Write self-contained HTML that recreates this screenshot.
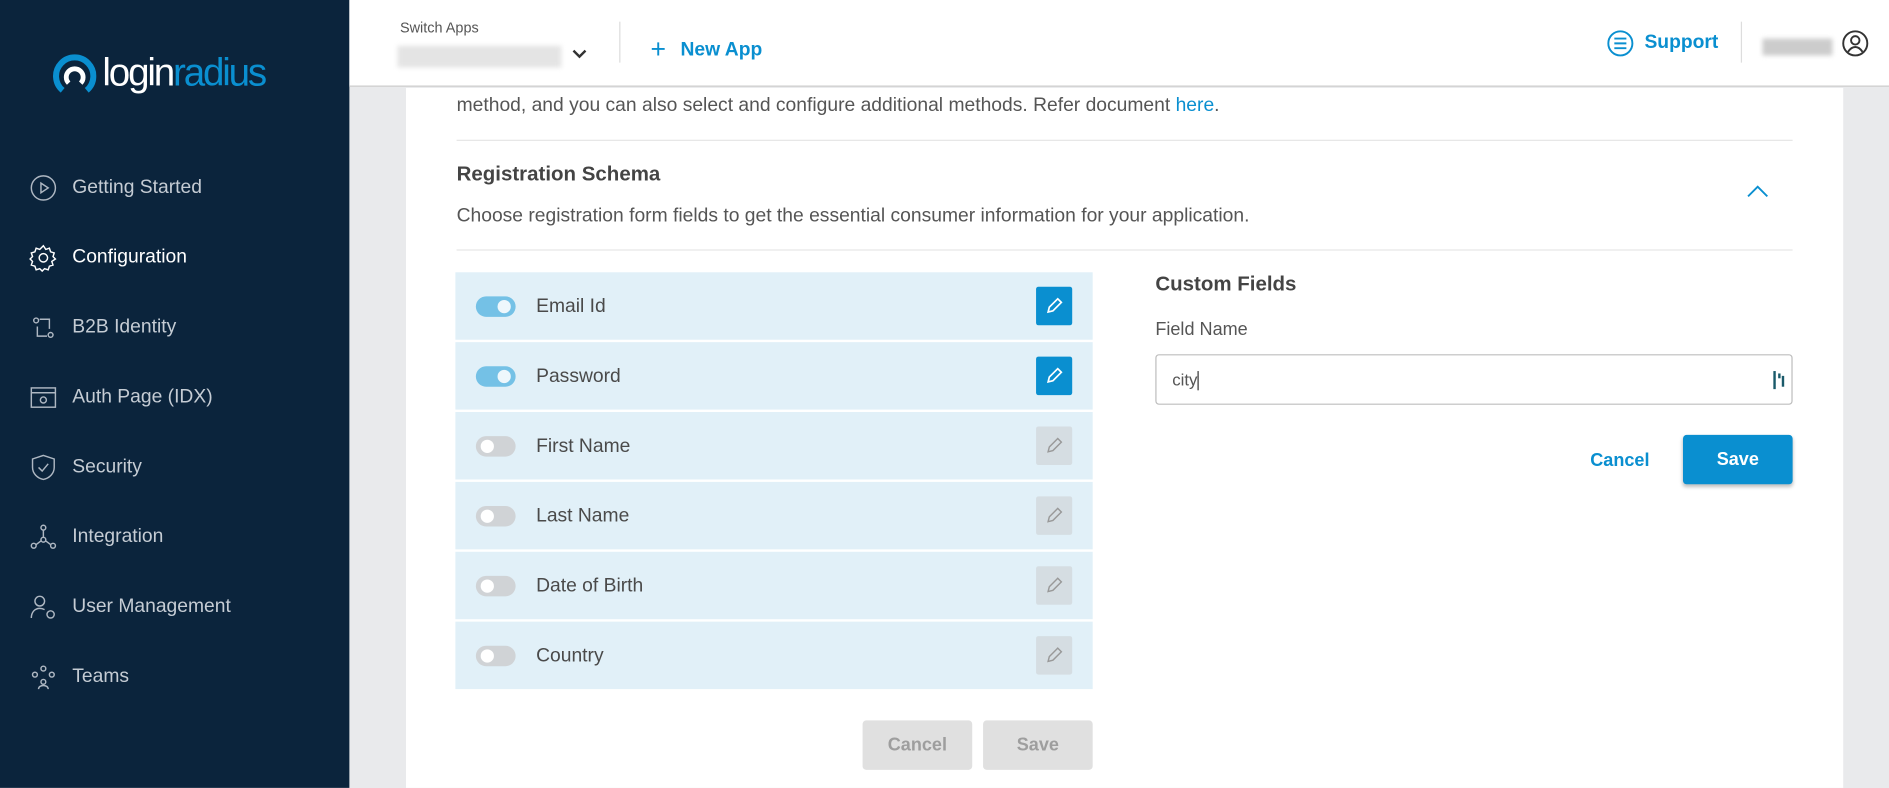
<!DOCTYPE html>
<html><head><meta charset="utf-8"><style>
*{box-sizing:border-box;margin:0;padding:0}
html,body{width:1889px;height:788px;overflow:hidden;background:#e9eaec}
#w{position:absolute;left:0;top:0;width:1568px;height:654px;transform:scale(1.20472);transform-origin:0 0;font-family:"Liberation Sans Narrow","Liberation Sans",sans-serif;color:#444}
.a{position:absolute}
#side{left:0;top:0;width:290px;height:654px;background:#0b243c}
.nav{position:absolute;left:24px;height:24px;display:flex;align-items:center;color:#c5ccd4;font-size:16px}
.nav svg{width:24px;height:24px;margin-right:12px}
#top{left:290px;top:0;width:1278px;height:72px;background:#fff;border-bottom:1px solid #c9c9c9}
#panel{left:337px;top:73px;width:1193px;height:581px;background:#fff}
.t{position:absolute;white-space:nowrap}
.row{position:absolute;left:378px;width:529px;height:56px;background:#e1f0f8}
.tg{position:absolute;left:17px;top:20px;width:33px;height:17px;border-radius:9px;background:#d0d3d6}
.tg i{position:absolute;top:3px;left:4px;width:11px;height:11px;border-radius:50%;background:#fff}
.on{background:#74c1e6}.on i{left:18px;background:#eef7fc}
.lb{position:absolute;left:67px;top:20px;font-size:16px;color:#4a4a4a}
.ed{position:absolute;left:482px;top:12px;width:30px;height:32px;border-radius:2px;background:#d5dde2}
.ed.b{background:#0a8fd0}
.ed svg{position:absolute;left:7px;top:8px}
.btn{position:absolute;height:41px;border-radius:3px;font-size:15px;font-weight:bold;display:flex;align-items:center;justify-content:center}
hr{position:absolute;border:0;border-top:1px solid #e6e6e6;height:0}
</style></head><body><div id="w">
<div id="side" class="a">
 <svg class="a" style="left:44px;top:42px" width="36" height="38" viewBox="0 0 36 38"><path d="M8 33 A15.5 15.5 0 1 1 28 33" fill="none" stroke="#0a8fd0" stroke-width="5"/><path d="M13 27 A7 7 0 1 1 23 27" fill="none" stroke="#fff" stroke-width="4"/></svg>
 <div class="t" style="left:85px;top:42px;font-size:32px;letter-spacing:-1.8px"><span style="color:#fff">login</span><span style="color:#0a8fd0">radius</span></div>
 <div class="nav" style="top:144px"><svg viewBox="0 0 24 24" fill="none" stroke="#aeb7c2" stroke-width="1.2"><circle cx="12" cy="12" r="10"/><path d="M10 8v8l6-4z"/></svg>Getting Started</div>
 <div class="nav" style="top:202px;color:#fff"><svg viewBox="0 0 24 24" fill="none" stroke="#fff" stroke-width="1.2"><circle cx="12" cy="12" r="3.5"/><path d="M12 2l2 3 3-1 1 3 3 1-1 3 2 2-3 2 1 3-3 1-1 3-3-1-2 2-2-2-3 1-1-3-3-1 1-3-2-2 2-2-1-3 3-1 1-3 3 1z"/></svg>Configuration</div>
 <div class="nav" style="top:260px"><svg viewBox="0 0 24 24" fill="none" stroke="#aeb7c2" stroke-width="1.2"><circle cx="6" cy="6" r="2"/><circle cx="18" cy="18" r="2"/><path d="M9 5h8v8M15 19H7v-8"/></svg>B2B Identity</div>
 <div class="nav" style="top:318px"><svg viewBox="0 0 24 24" fill="none" stroke="#aeb7c2" stroke-width="1.2"><rect x="2" y="4" width="20" height="16"/><path d="M2 8h20"/><circle cx="12" cy="14" r="2.5"/></svg>Auth Page (IDX)</div>
 <div class="nav" style="top:376px"><svg viewBox="0 0 24 24" fill="none" stroke="#aeb7c2" stroke-width="1.2"><path d="M12 2l9 3v7c0 5-4 9-9 10-5-1-9-5-9-10V5z"/><path d="M8 12l3 3 5-6"/></svg>Security</div>
 <div class="nav" style="top:434px"><svg viewBox="0 0 24 24" fill="none" stroke="#aeb7c2" stroke-width="1.2"><circle cx="12" cy="4" r="2"/><circle cx="4" cy="19" r="2"/><circle cx="20" cy="19" r="2"/><circle cx="12" cy="14" r="2"/><path d="M12 6v6M6 18l4-3M18 18l-4-3"/></svg>Integration</div>
 <div class="nav" style="top:492px"><svg viewBox="0 0 24 24" fill="none" stroke="#aeb7c2" stroke-width="1.2"><circle cx="9" cy="7" r="4"/><path d="M2 21c0-5 3-8 7-8 2 0 3 .5 4 1"/><circle cx="18" cy="18" r="3"/></svg>User Management</div>
 <div class="nav" style="top:550px"><svg viewBox="0 0 24 24" fill="none" stroke="#aeb7c2" stroke-width="1.2"><circle cx="12" cy="5" r="2"/><circle cx="5" cy="10" r="2"/><circle cx="19" cy="10" r="2"/><circle cx="12" cy="16" r="2"/><path d="M8 22c0-2 2-3 4-3s4 1 4 3"/></svg>Teams</div>
</div>
<div id="top" class="a">
 <div class="t" style="left:42px;top:16px;font-size:12px;color:#555">Switch Apps</div>
 <div class="a" style="left:40px;top:38px;width:136px;height:18px;background:#e4e4e4;filter:blur(2px)"></div>
 <svg class="a" style="left:184px;top:40px" width="14" height="10" viewBox="0 0 14 10"><path d="M2 2l5 5 5-5" fill="none" stroke="#333" stroke-width="2"/></svg>
 <div class="a" style="left:224px;top:18px;width:1px;height:34px;background:#ddd"></div>
 <div class="t" style="left:250px;top:26px;font-size:16px;color:#0a8fd0;font-weight:bold"><span style="font-weight:normal;font-size:22px;position:relative;top:2px;margin-right:12px">+</span>New App</div>
 <svg class="a" style="left:1044px;top:25px" width="22" height="22" viewBox="0 0 22 22" fill="none" stroke="#0a8fd0" stroke-width="1.6"><circle cx="11" cy="11" r="10"/><path d="M6 7h10M6 11h10M6 15h10"/></svg>
 <div class="t" style="left:1075px;top:27px;font-size:16px;font-weight:bold;color:#0a8fd0">Support</div>
 <div class="a" style="left:1155px;top:18px;width:1px;height:34px;background:#ddd"></div>
 <div class="a" style="left:1173px;top:32px;width:58px;height:14px;background:#ccc;filter:blur(2px)"></div>
 <svg class="a" style="left:1239px;top:25px" width="22" height="22" viewBox="0 0 22 22" fill="none" stroke="#333" stroke-width="1.6"><circle cx="11" cy="11" r="10"/><circle cx="11" cy="8.5" r="3.5"/><path d="M5 18c2-3 4-4 6-4s4 1 6 4"/></svg>
</div>
<div id="panel" class="a"></div>
<div class="t" style="left:379px;top:79px;font-size:16px;color:#555">method, and you can also select and configure additional methods. Refer document <span style="color:#0a8fd0">here</span>.</div>
<hr style="left:379px;top:116px;width:1109px">
<div class="t" style="left:379px;top:135px;font-size:17px;font-weight:bold;color:#444">Registration Schema</div>
<svg class="a" style="left:1449px;top:153px" width="20" height="12" viewBox="0 0 20 12"><path d="M2 10l8-8 8 8" fill="none" stroke="#0a8fd0" stroke-width="1.6"/></svg>
<div class="t" style="left:379px;top:171px;font-size:16px;color:#555">Choose registration form fields to get the essential consumer information for your application.</div>
<hr style="left:379px;top:207px;width:1109px">

<div class="row" style="top:226px"><div class="tg on"><i></i></div><div class="lb">Email Id</div><div class="ed b"><svg width="16" height="16" viewBox="0 0 16 16" fill="none" stroke="#fff" stroke-width="1.4"><path d="M3 13l1-4 7-7 3 3-7 7z"/></svg></div></div>
<div class="row" style="top:284px"><div class="tg on"><i></i></div><div class="lb">Password</div><div class="ed b"><svg width="16" height="16" viewBox="0 0 16 16" fill="none" stroke="#fff" stroke-width="1.4"><path d="M3 13l1-4 7-7 3 3-7 7z"/></svg></div></div>
<div class="row" style="top:342px"><div class="tg"><i></i></div><div class="lb">First Name</div><div class="ed"><svg width="16" height="16" viewBox="0 0 16 16" fill="none" stroke="#999" stroke-width="1.2"><path d="M3 13l1-4 7-7 3 3-7 7z"/></svg></div></div>
<div class="row" style="top:400px"><div class="tg"><i></i></div><div class="lb">Last Name</div><div class="ed"><svg width="16" height="16" viewBox="0 0 16 16" fill="none" stroke="#999" stroke-width="1.2"><path d="M3 13l1-4 7-7 3 3-7 7z"/></svg></div></div>
<div class="row" style="top:458px"><div class="tg"><i></i></div><div class="lb">Date of Birth</div><div class="ed"><svg width="16" height="16" viewBox="0 0 16 16" fill="none" stroke="#999" stroke-width="1.2"><path d="M3 13l1-4 7-7 3 3-7 7z"/></svg></div></div>
<div class="row" style="top:516px"><div class="tg"><i></i></div><div class="lb">Country</div><div class="ed"><svg width="16" height="16" viewBox="0 0 16 16" fill="none" stroke="#999" stroke-width="1.2"><path d="M3 13l1-4 7-7 3 3-7 7z"/></svg></div></div>

<div class="btn" style="left:716px;top:598px;width:91px;background:#e0e0e0;color:#9e9e9e">Cancel</div>
<div class="btn" style="left:816px;top:598px;width:91px;background:#e0e0e0;color:#9e9e9e">Save</div>

<div class="t" style="left:959px;top:226px;font-size:17px;font-weight:bold;color:#444">Custom Fields</div>
<div class="t" style="left:959px;top:265px;font-size:15px;color:#555">Field Name</div>
<div class="a" style="left:959px;top:294px;width:529px;height:42px;border:1px solid #bdbdbd;border-radius:3px;background:#fff"></div>
<div class="t" style="left:973px;top:307px;font-size:14px;color:#555">city<span style="display:inline-block;width:1px;height:16px;background:#333;vertical-align:middle"></span></div>
<div class="a" style="left:1472px;top:308px;width:2px;height:15px;background:#1a5a6a"></div>
<div class="a" style="left:1476px;top:310px;width:2px;height:4px;background:#1a5a6a"></div>
<div class="a" style="left:1479px;top:312px;width:2px;height:9px;background:#1a5a6a"></div>
<div class="t" style="left:1320px;top:374px;font-size:15px;font-weight:bold;color:#0a8fd0">Cancel</div>
<div class="btn" style="left:1397px;top:361px;width:91px;background:#0a8fd0;color:#fff;box-shadow:0 2px 3px rgba(0,0,0,.25)">Save</div>
</div></body></html>
